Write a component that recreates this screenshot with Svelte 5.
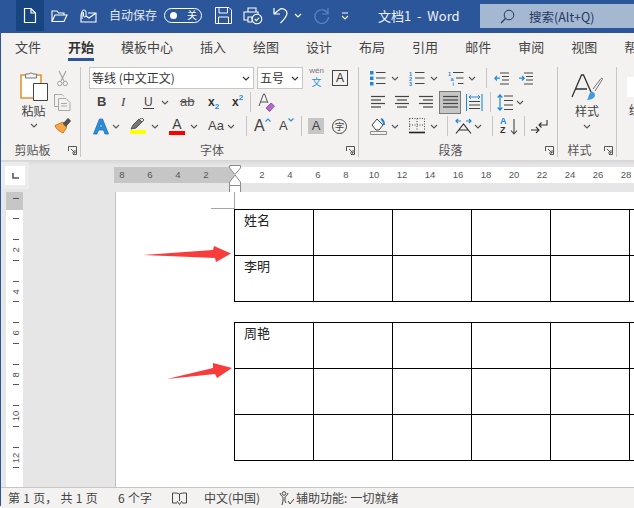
<script>
  const tabs = ['文件','开始','模板中心','插入','绘图','设计','布局','引用','邮件','审阅','视图','帮助'];
  const hnums = ['8','6','4','2','',...Array.from({length:15},(_,i)=>String((i+1)*2))];
  const vnums = ['', '2','4','6','8','10','12','14'];
  const rows = [0,1,2,3,4,5];
</script>

{#snippet chev(c = '#555')}
  <svg class="chev" width="8" height="5" viewBox="0 0 8 5"><path d="M1 1l3 3 3-3" fill="none" stroke={c} stroke-width="1.1"/></svg>
{/snippet}
{#snippet launcher()}
  <svg class="launch" width="9" height="9" viewBox="0 0 9 9"><path d="M.5 5V.5H8.5V8.500H5M3 3l4 4M7 4v3H4" fill="none" stroke="#555" stroke-width="1"/></svg>
{/snippet}
{#snippet sep()}<span class="vsep"></span>{/snippet}
{#snippet lines(w, xs)}
  <svg width={w} height="14" viewBox="0 0 {w} 14">
    {#each xs as [a, b], i}<path d="M{a} {1.500 + i * 3.500}H{b}" stroke="#444" stroke-width="1.200"/>{/each}
  </svg>
{/snippet}

<div class="window">
  <header class="titlebar">
    <div class="tb-doc"><svg width="14" height="17" viewBox="0 0 14 17"><path d="M1.500 1.500H8L12.500 6V15.500H1.500ZM8 1.500V6H12.500" fill="none" stroke="#fff" stroke-width="1.200"/></svg></div>
    <svg width="17" height="14" viewBox="0 0 17 14"><path d="M1 12.500V2H6L7.500 4H13V6M1 12.500L4 6H16L13 12.500Z" fill="none" stroke="#fff" stroke-width="1.100"/></svg>
    <svg width="17" height="14" viewBox="0 0 17 14"><path d="M8 4H16V13H1V6M1 6L2 3M16 4L9 9 6 7" fill="none" stroke="#fff" stroke-width="1.100"/><path d="M2 10V3a2 2 0 0 1 4 0V7a1.300 1.300 0 0 1-2.500 0V3" fill="none" stroke="#fff" stroke-width="1"/></svg>
    <span class="autosave">自动保存</span>
    <div class="toggle"><i></i><span>关</span></div>
    <svg width="17" height="17" viewBox="0 0 17 17"><path d="M.5.500H14L16.500 3V16.500H.5ZM4 .5V6H12.500V.5M3.500 16.500V10H13.500V16.500" fill="none" stroke="#fff" stroke-width="1"/></svg>
    <svg width="20" height="18" viewBox="0 0 20 18"><path d="M5 5V1H13V5M5 13H1V5H15V7M5 10H9V15H5Z" fill="none" stroke="#fff" stroke-width="1.100"/><circle cx="14" cy="12" r="4.800" fill="#2b579a" stroke="#fff" stroke-width="1.100"/><path d="M11.800 12l1.600 1.600 2.800-3" fill="none" stroke="#fff" stroke-width="1.100"/></svg>
    <svg width="16" height="17" viewBox="0 0 16 17"><path d="M1 1V7H7M1.500 6.500L6 3a4.800 4.800 0 0 1 8 3.500c0 3-3 6-6.500 9.500" fill="none" stroke="#fff" stroke-width="1.200"/></svg>
    {@render chev('#fff')}
    <svg width="17" height="17" viewBox="0 0 17 17"><path d="M15 1V7H9M15 7A6.800 6.800 0 1 0 15.500 10" fill="none" stroke="#5f85bb" stroke-width="1.200"/></svg>
    <svg class="dd" width="8" height="8" viewBox="0 0 8 8"><path d="M1 1H7M1 4l3 3 3-3" fill="none" stroke="#fff" stroke-width="1.100"/></svg>
    <span class="doc-title">文档1&nbsp; -&nbsp; Word</span>
    <div class="search">
      <svg width="15" height="15" viewBox="0 0 15 15"><circle cx="9" cy="6" r="4.800" fill="none" stroke="#1f3a60" stroke-width="1"/><path d="M5.500 9.500L1 14" stroke="#1f3a60" stroke-width="1.200"/></svg>
      <span>搜索(Alt+Q)</span>
    </div>
  </header>

  <nav class="tabs">
    {#each tabs as t, i}<span class="tab" class:active={i === 1}>{t}</span>{/each}
  </nav>

  <section class="ribbon">
    <div class="group g-clip">
      <div class="clip-body">
        <div class="big paste">
          <svg width="28" height="30" viewBox="0 0 28 30">
            <path d="M1 4H21V27H1Z" fill="#fff" stroke="#e8912d" stroke-width="1.600"/>
            <path d="M5.500 7V3H9a2.500 2.500 0 0 1 4 0H16.500V7Z" fill="#f3f2f1" stroke="#777" stroke-width="1"/>
            <path d="M13.500 12.500H27.500V29.500H13.500Z" fill="#fff" stroke="#444" stroke-width="1"/>
          </svg>
          <span class="big-label">粘贴</span>
          {@render chev()}
        </div>
        <div class="clip-tools">
          <svg width="11" height="17" viewBox="0 0 11 17"><path d="M2 1L7 11M9 1L4 11" stroke="#a0a0a0" stroke-width="1.100" fill="none"/><circle cx="2.800" cy="13.500" r="2.200" fill="none" stroke="#a0a0a0"/><circle cx="8.200" cy="13.500" r="2.200" fill="none" stroke="#a0a0a0"/></svg>
          <svg width="17" height="17" viewBox="0 0 17 17"><path d="M4 12.500H.5V.5H8L10 2.500" fill="none" stroke="#a8a8a8"/><path d="M4.500 4.500H12L16 8.500V16.500H4.500ZM7 9.500H13M7 12H13" fill="none" stroke="#a8a8a8"/></svg>
          <svg width="17" height="16" viewBox="0 0 17 16"><path d="M1 7.500L9 4l4 5-4 6C5 13 2 11 1 7.500Z" fill="#f4a84a" stroke="#d97a1a"/><path d="M9 6L14 .5 16.500 3 11.500 8.500" fill="#555" stroke="#444"/></svg>
        </div>
      </div>
      <footer class="glabel"><span>剪贴板</span>{@render launcher()}</footer>
    </div>

    <div class="group g-font">
      <div class="row f1">
        <div class="combo font-combo"><span>等线 (中文正文)</span>{@render chev('#333')}</div>
        <div class="combo size-combo"><span>五号</span>{@render chev('#333')}</div>
        <div class="wen"><small>wén</small><b>文</b></div>
        <span class="boxa">A</span>
      </div>
      <div class="row f2">
        <b class="ti bold">B</b>
        <i class="ti ital">I</i>
        <span class="ti under">U</span>
        {@render chev()}
        <span class="ti strike">ab</span>
        <span class="ti script"><b>x</b><sub>2</sub></span>
        <span class="ti script"><b>x</b><sup>2</sup></span>
        {@render sep()}
        <svg width="17" height="19" viewBox="0 0 17 19"><path d="M1 13L5.500 1H6.500L10 10M2.500 9H9" fill="none" stroke="#555"/><path d="M8 15l5-5 3.500 3-5 5.500Z" fill="#b36ac8" stroke="#9c4fb5"/></svg>
      </div>
      <div class="row f3">
        <svg width="16" height="17" viewBox="0 0 16 17"><path d="M.5 16L6.500 1H9.500L15.500 16H12L10.500 12H5.500L4 16ZM6.500 9H9.500L8 5Z" fill="#2b8fdc" stroke="#1a6fb5" stroke-width=".8"/></svg>
        {@render chev()}
        <span class="under-bar">
          <svg width="16" height="12" viewBox="0 0 16 12"><path d="M1 11l2-4 6-6 3 3-6 6Z" fill="#777" stroke="#555"/><path d="M10 1l2-1 2 2-2 2" fill="none" stroke="#555"/></svg>
          <i class="yellow"></i>
        </span>
        {@render chev()}
        <span class="under-bar">
          <span class="a-ltr">A</span>
          <i class="red"></i>
        </span>
        {@render chev()}
        <span class="aa">Aa</span>
        {@render chev()}
        {@render sep()}
        <span class="grow">A<svg width="6" height="4" viewBox="0 0 6 4"><path d="M.5 3.500L3 1l2.500 2.500" fill="none" stroke="#2b8fdc" stroke-width="1.200"/></svg></span>
        <span class="grow small">A<svg width="6" height="4" viewBox="0 0 6 4"><path d="M.5.5L3 3 5.500.5" fill="none" stroke="#2b8fdc" stroke-width="1.200"/></svg></span>
        {@render sep()}
        <span class="shade">A</span>
        <span class="circle">字</span>
      </div>
      <footer class="glabel"><span>字体</span>{@render launcher()}</footer>
    </div>

    <div class="group g-para">
      <div class="row p1">
        <svg width="16" height="15" viewBox="0 0 16 15"><path d="M0 0h3.500v3.500H0zM0 5.500h3.500V9H0zM0 11h3.500v3.500H0z" fill="#1e88d8"/><path d="M6 1.500H15.500M6 7H15.500M6 12.500H15.500" stroke="#444" stroke-width="1.200"/></svg>
        {@render chev()}
        <svg width="16" height="15" viewBox="0 0 16 15"><text x="0" y="5" class="mini">1</text><text x="0" y="10" class="mini">2</text><text x="0" y="15" class="mini">3</text><path d="M6 1.500H15.500M6 7H15.500M6 12.500H15.500" stroke="#444" stroke-width="1.200"/></svg>
        {@render chev()}
        <svg width="16" height="15" viewBox="0 0 16 15"><text x="0" y="5" class="mini">1</text><text x="2.500" y="10" class="mini">a</text><text x="4.500" y="15" class="mini">i</text><path d="M5 1.500H15.500M8 7H15.500M10 12.500H15.500" stroke="#444" stroke-width="1.200"/></svg>
        {@render chev()}
        {@render sep()}
        <svg width="15" height="13" viewBox="0 0 15 13"><path d="M6 1H15M8 4.500H15M8 8H15M6 12H15" stroke="#444" stroke-width="1.100"/><path d="M6 6.200H1M3 4L.8 6.200 3 8.500" fill="none" stroke="#1e88d8" stroke-width="1.200"/></svg>
        <svg width="15" height="13" viewBox="0 0 15 13"><path d="M6 1H15M8 4.500H15M8 8H15M6 12H15" stroke="#444" stroke-width="1.100"/><path d="M1 6.200H6M4 4L6.200 6.200 4 8.500" fill="none" stroke="#1e88d8" stroke-width="1.200"/></svg>
      </div>
      <div class="row p2">
        {@render lines(15, [[0,14],[0,10],[0,14],[0,10]])}
        {@render lines(15, [[0,14],[2,12],[0,14],[2,12]])}
        {@render lines(15, [[0,14],[4,14],[0,14],[4,14]])}
        <span class="pressed">{@render lines(15, [[0,15],[0,15],[0,15],[0,15]])}</span>
        <svg width="17" height="17" viewBox="0 0 17 17"><path d="M.5 0V17M16 0V17" stroke="#1e88d8" stroke-width="1.100"/><path d="M3 3H14M5 1.200L3 3l2 1.800M12 1.200L14 3l-2 1.800" fill="none" stroke="#1e88d8"/><path d="M3 7.500H14M3 11H14M3 14.500H14" stroke="#444" stroke-width="1.100"/></svg>
        {@render sep()}
        <svg width="16" height="17" viewBox="0 0 16 17"><path d="M7 2H16M7 6.500H16M7 11H16M7 15.500H16" stroke="#444" stroke-width="1.200"/><path d="M3 1V16M.7 3.500L3 1l2.300 2.500M.7 13.500L3 16l2.300-2.500" fill="none" stroke="#1e88d8" stroke-width="1.200"/></svg>
        {@render chev()}
      </div>
      <div class="row p3">
        <svg width="17" height="18" viewBox="0 0 17 18"><path d="M2 8L7 2l6 6-4 5H6Z" fill="#fff" stroke="#444"/><path d="M11 2c2 1 3 3 3 6" fill="none" stroke="#1e88d8" stroke-width="2"/><path d="M.5 14.500H16.500V17.500H.5Z" fill="#f3f2f1" stroke="#8a8a8a"/></svg>
        {@render chev()}
        <svg width="16" height="16" viewBox="0 0 16 16"><path d="M.5.5H15.500V13M.5.5V13M8 .5V13M.5 7H15.500" fill="none" stroke="#444" stroke-dasharray="1 1.500"/><path d="M0 14.500H16" stroke="#222" stroke-width="1.600"/></svg>
        {@render chev()}
        {@render sep()}
        <svg width="17" height="16" viewBox="0 0 17 16"><path d="M1 15.500L8.500 6 16 15.500M4 12H13" fill="none" stroke="#333" stroke-width="1.200"/><path d="M1 3H6M3 1L1 3l2 2M11 3H16M14 1l2 2-2 2" fill="none" stroke="#1e88d8" stroke-width="1.200"/></svg>
        {@render chev()}
        {@render sep()}
        <span class="sort"><span class="az"><em>A</em><em>Z</em></span><svg width="8" height="17" viewBox="0 0 8 17"><path d="M4 1V16M1 12.500L4 16l3-3.500" fill="none" stroke="#444" stroke-width="1.100"/></svg></span>
        {@render sep()}
        <svg width="17" height="15" viewBox="0 0 17 15"><path d="M0 11H8M5 8l3 3-3 3" fill="none" stroke="#333" stroke-width="1.100"/><path d="M16 1V6H8M10.500 3.500L8 6l2.500 2.500" fill="none" stroke="#333" stroke-width="1.100"/></svg>
      </div>
      <footer class="glabel"><span>段落</span>{@render launcher()}</footer>
    </div>

    <div class="group g-style">
      <div class="big styles">
        <svg width="32" height="28" viewBox="0 0 32 28">
          <path d="M1 23L10.500 1H12.500L20 18M4.500 15H16" fill="none" stroke="#333" stroke-width="1.300"/>
          <path d="M22 15L30 4.500c1.500-1 2 .5 1 1.500L24 17" fill="none" stroke="#777"/>
          <path d="M16 26c3 0 6-1 7.500-3 1.500-3-1-6-3.500-5-2 1-2 5-4 8Z" fill="#3f9ae0"/>
        </svg>
        <span class="big-label">样式</span>
        {@render chev()}
      </div>
      <footer class="glabel"><span>样式</span>{@render launcher()}</footer>
    </div>

    <div class="group g-next">
      <div class="next-box"></div>
      <span class="next-text">绘图</span>
    </div>
  </section>

  <div class="hruler-row">
    <div class="corner"><div class="corner-in"><svg width="7" height="6" viewBox="0 0 7 6"><path d="M1 0V5H7" fill="none" stroke="#555" stroke-width="1.600"/></svg></div></div>
    <div class="hruler">
      {#each hnums as n}<span>{n}</span>{/each}
    </div>
    <svg class="indent" width="12" height="28" viewBox="0 0 12 28">
      <path d="M.5.5H11.500V3L6 9.500.5 3Z" fill="#fff" stroke="#8a8a8a"/>
      <path d="M6 10L11.500 17V20.500H.5V17Z" fill="#fff" stroke="#8a8a8a"/>
      <path d="M.5 20.500H11.500V27.500H.5Z" fill="#fff" stroke="#8a8a8a"/>
    </svg>
  </div>

  <main class="doc">
    <div class="vruler">
      {#each vnums as n}
        <div class="vcell"><i></i><span>{n}</span><i></i></div>
      {/each}
    </div>
    <div class="gutter"></div>
    <div class="page">
      <span class="crop-h"></span><span class="crop-v"></span>
      <table>
        <tbody>
          <tr>{#each rows as c}<td>{c === 0 ? '姓名' : ''}</td>{/each}</tr>
          <tr>{#each rows as c}<td>{c === 0 ? '李明' : ''}</td>{/each}</tr>
        </tbody>
      </table>
      <table class="t2">
        <tbody>
          <tr>{#each rows as c}<td>{c === 0 ? '周艳' : ''}</td>{/each}</tr>
          <tr>{#each rows as c}<td></td>{/each}</tr>
          <tr>{#each rows as c}<td></td>{/each}</tr>
        </tbody>
      </table>
    </div>
    <svg class="arrows" width="634" height="295" viewBox="0 192 634 295">
      <path d="M143 255L213 250 214 246 231 253.500 216 262 215 258Z" fill="#f83c3c"/>
      <path d="M167 379L213 368 213 363 232 368 217 378 215 374Z" fill="#f83c3c"/>
    </svg>
  </main>

  <footer class="status">
    <span>第 1 页， 共 1 页</span>
    <span>6 个字</span>
    <svg width="15" height="13" viewBox="0 0 15 13"><path d="M7.500 2C6 1 3 1 .5 1V11H5M7.500 2C9 1 12 1 14.500 1V11H10M7.500 2V9M5 9l2.500 3.500L10 9" fill="none" stroke="#444"/></svg>
    <span>中文(中国)</span>
    <span class="a11y">
      <svg width="16" height="15" viewBox="0 0 16 15"><circle cx="5" cy="2.500" r="1.800" fill="none" stroke="#444"/><path d="M1 2c1 3 2 3 3 4v4l-1 4M9 2C8 5 7 5 6 6v4l1 2M9 10l2 3 4-5" fill="none" stroke="#444"/></svg>
      <span>辅助功能: 一切就绪</span>
    </span>
  </footer>
</div>

<style>
  :global(body) { margin: 0; }
  .window {
    position: relative; width: 634px; height: 508px; overflow: hidden;
    display: flex; flex-direction: column; background: #e6e6e6;
    font-family: "Noto Sans CJK SC", "Liberation Sans", sans-serif;
    color: #444; font-size: 12px;
  }
  .window::before {
    content: ""; position: absolute; z-index: 3; left: 0; top: 33px; bottom: 2px; width: 1px; background: #2b579a;
  }
  .titlebar {
    flex: none; height: 33px; background: #2b579a; color: #fff; padding-left: 16px;
    display: grid; align-items: center;
    grid-template-columns: 35px 29px 29px 55px 51px 28px 30px 21px 19px 28px 37px 102px 155px;
  }
  .tb-doc { width: 28px; height: 31px; align-self: start; background: #16457f; display: flex; align-items: center; justify-content: center; }
  .autosave { font-size: 12px; color: #e4eaf3; line-height: 16px; margin-top: -3px; }
  .toggle {
    width: 38px; height: 15px; box-sizing: border-box; border: 1px solid #fff; border-radius: 8px;
    display: flex; align-items: center; justify-content: space-between; padding: 0 4px 0 5px;
    margin-top: -3px;
  }
  .toggle i { width: 7px; height: 7px; border-radius: 50%; background: #fff; }
  .toggle span { font-size: 10px; line-height: 12px; }
  .titlebar svg { margin-top: -2px; }
  .titlebar .tb-doc svg { margin-top: 0; }
  .titlebar .dd { margin-left: 0; }
  .doc-title { font-size: 13px; color: #f0f3f8; white-space: nowrap; margin-top: -3px; font-family: "Noto Sans CJK SC", "Open Sans", sans-serif; }
  .search {
    height: 24px; align-self: start; margin-top: 4px; background: #a5b8d2; color: #1f3a60;
    display: flex; align-items: center; padding-left: 20px; gap: 14px; font-size: 12.500px;
  }
  .search svg { margin-top: 0; }

  .tabs { flex: none; height: 31px; background: #f3f2f1; display: flex; padding-left: 15px; gap: 27px; white-space: nowrap; }
  .tab { font-size: 13px; line-height: 19px; height: 28px; padding-top: 4px; box-sizing: border-box; color: #444; flex: none; }
  .tab.active { font-weight: 700; color: #333; border-bottom: 3px solid #2b579a; height: 28px; }

  .ribbon { flex: none; height: 96px; background: #f3f2f1; display: flex; box-sizing: border-box; padding-top: 3px; padding-bottom: 3px; }
  .group { flex: none; box-sizing: border-box; border-right: 1px solid #c6c6c6; display: flex; flex-direction: column; position: relative; }
  .g-clip { width: 81px; }
  .g-font { width: 278px; }
  .g-para { width: 199px; }
  .g-style { width: 59px; }
  .g-next { border: 0; width: 40px; padding: 10px 0 0 10px; }
  .next-box { width: 40px; height: 20px; background: #fff; }
  .next-text { margin-top: 3px; margin-left: 2px; line-height: 20px; white-space: nowrap; }

  .glabel { margin-top: auto; margin-bottom: -1px; height: 16px; display: flex; align-items: center; font-size: 12px; line-height: 16px; color: #555; }
  .glabel span { flex: 1; text-align: center; }
  .launch { margin: 0 3px; }

  .clip-body { display: flex; padding-left: 17px; }
  .big { display: flex; flex-direction: column; align-items: center; }
  .paste { width: 29px; padding-top: 4px; margin-left: 2px; }
  .big-label { font-size: 12px; line-height: 16px; margin-top: 2px; color: #444; white-space: nowrap; }
  .big .chev { margin-top: 4px; }
  .clip-tools { display: flex; flex-direction: column; align-items: center; width: 17px; margin-left: 6px; padding-top: 3px; gap: 7px; }

  .row { height: 24px; display: grid; align-items: center; justify-items: start; }
  .row:first-child { margin-top: -1px; }
  .f1 { padding-left: 8px; grid-template-columns: 168px 52px 23px auto; }
  .f2 { padding-left: 16px; grid-template-columns: 24px 22px 18px 18px 29px 24px 18px 8px auto; }
  .f3 { padding-left: 12px; grid-template-columns: 19px 18px 21px 18px 21px 18px 19px 19px 8px 25px 22px 7px 24px auto; }
  .p1 { padding-left: 11px; grid-template-columns: 21px 18px 21px 18px 20px 18px 8px 24px auto; }
  .p2 { padding-left: 12px; grid-template-columns: 24px 24px 20px 27px 24px 7px 19px auto; }
  .p3 { padding-left: 11px; grid-template-columns: 21px 18px 21px 17px 8px 19px 18px 8px 24px 7px auto; }

  .vsep { width: 1px; height: 20px; background: #c6c6c6; display: block; }
  .combo { height: 22px; box-sizing: border-box; border: 1px solid #c6c6c6; background: #fff; display: flex; align-items: center; justify-content: space-between; padding: 0 3px 0 2px; color: #333; white-space: nowrap; line-height: 16px; }
  .font-combo { width: 165px; }
  .size-combo { width: 46px; padding-left: 2px; }
  .wen { display: flex; flex-direction: column; align-items: center; width: 15px; }
  .wen small { font-size: 8px; line-height: 8px; color: #777; font-family: "Liberation Sans", sans-serif; }
  .wen b { font-size: 10px; font-weight: 400; line-height: 14px; color: #2b8fdc; }
  .boxa { width: 16px; height: 16px; box-sizing: border-box; border: 1px solid #444; display: flex; align-items: center; justify-content: center; font: 12px/14px "Liberation Sans", sans-serif; color: #333; }

  .ti { font-family: "Liberation Sans", sans-serif; color: #444; display: block; line-height: 16px; }
  .bold { font-size: 13px; font-weight: 700; }
  .ital { font-size: 13px; font-family: "Liberation Serif", serif; }
  .under { font-size: 12px; border-bottom: 1px solid #444; line-height: 12px; padding: 0 1px; }
  .strike { font-size: 13px; text-decoration: line-through; color: #555; padding: 0 1px; }
  .script { font-size: 12px; display: flex; align-items: center; }
  .script b { color: #333; }
  .script sub, .script sup { font-size: 8px; color: #1e88d8; font-weight: 700; line-height: 8px; }
  .script sub { margin-top: 9px; vertical-align: baseline; }
  .script sup { margin-top: -9px; vertical-align: baseline; }

  .under-bar { width: 16px; display: flex; flex-direction: column; align-items: center; }
  .under-bar i { width: 16px; height: 4px; display: block; }
  .yellow { background: #ffff00; }
  .red { background: #ff0000; }
  .a-ltr { font: 14px/13px "Liberation Sans", sans-serif; color: #444; }
  .aa { font: 13px/16px "Liberation Sans", sans-serif; color: #444; }
  .grow { font: 16px/18px "Liberation Sans", sans-serif; color: #444; display: flex; align-items: flex-start; }
  .grow svg { margin-top: 1px; }
  .grow.small { font-size: 13px; }
  .shade { width: 16px; height: 16px; background: #c6c6c6; text-align: center; font: 13px/16px "Liberation Sans", sans-serif; color: #444; }
  .circle { width: 15px; height: 15px; box-sizing: border-box; border: 1px solid #444; border-radius: 50%; text-align: center; font-size: 9.500px; line-height: 13px; }
  .mini { font: 700 5.500px "Liberation Sans", sans-serif; fill: #1e88d8; }
  .pressed { width: 22px; height: 23px; box-sizing: border-box; background: #c6c6c6; border: 1px solid #7a7a7a; display: flex; align-items: center; justify-content: center; margin-top: 0; }
  .sort { display: flex; align-items: center; gap: 1px; }
  .az { display: flex; flex-direction: column; width: 9px; }
  .az em { font: 700 9px/9px "Liberation Sans", sans-serif; color: #1e88d8; }
  .az em + em { color: #333; }

  .styles { align-items: center; width: 58px; padding-top: 7px; padding-right: 0; }
  .styles .big-label { margin-top: 1px; }
  .styles .chev { margin-top: 5px; }

  .hruler-row { flex: none; height: 32px; position: relative; background: linear-gradient(#d6d6d6, #e6e6e6 5px); display: flex; align-items: flex-start; }
  .corner { width: 20px; height: 19px; padding: 4px; margin: 2px 0 0 1px; background: #ececec; flex: none; }
  .corner-in { width: 20px; height: 19px; background: #fff; display: flex; align-items: center; justify-content: center; }
  .hruler {
    margin: 7px 0 0 85px; height: 16px; flex: 1; overflow: hidden; display: flex;
    background: linear-gradient(90deg, #c6c6c6 120px, #fff 120px);
  }
  .hruler span {
    flex: none; width: 28px; font: 9.500px/16px "Liberation Sans", sans-serif; color: #555; text-align: center; position: relative; left: -6px;
  }
  .indent { position: absolute; left: 229px; top: 4.500px; }

  .doc { flex: 1; min-height: 0; display: flex; position: relative; overflow: hidden; }
  .vruler {
    flex: none; width: 17px; margin-left: 6px; box-sizing: border-box; overflow: hidden; padding-left: 3px;
    background: linear-gradient(#c6c6c6 18px, #fff 18px);
  }
  .vcell { height: 41.500px; display: flex; flex-direction: column; align-items: center; justify-content: center; width: 14px; position: relative; top: -4.250px; }
  .vcell i { width: 6px; height: 1px; background: #555; flex: none; }
  .vcell span { height: 19.750px; display: flex; align-items: center; justify-content: center; font: 9.500px/10px "Liberation Sans", sans-serif; color: #555; transform: rotate(-90deg); white-space: nowrap; }
  .gutter { flex: none; width: 92px; background: #e6e6e6; }
  .page { flex: 1; box-sizing: border-box; background: #fff; border-left: 1px solid #c0c0c0; padding: 17px 0 0 118px; position: relative; overflow: hidden; }
  .crop-h { position: absolute; left: 95px; top: 16px; width: 23px; height: 1px; background: #a6a6a6; }
  .crop-v { position: absolute; left: 118px; top: 0; width: 1px; height: 17px; background: #a6a6a6; }
  table { border-collapse: collapse; table-layout: fixed; width: 474px; }
  td { width: 79px; height: 46px; box-sizing: border-box; border: 1px solid #000; padding: 0 0 0 9px; vertical-align: top; font-size: 13px; line-height: 20px; color: #222; }
  .t2 { margin-top: 20px; }
  .arrows { position: absolute; left: 0; top: 0; pointer-events: none; }

  .status { flex: none; height: 21px; box-sizing: border-box; background: #f3f2f1; border-top: 1px solid #c6c6c6; display: grid; align-items: center; padding-left: 8px; grid-template-columns: 110px 54px 32px 75px auto; white-space: pre; font-size: 12px; line-height: 18px; color: #444; word-spacing: .6px; }
  .a11y { display: flex; align-items: center; gap: 1px; }
</style>
